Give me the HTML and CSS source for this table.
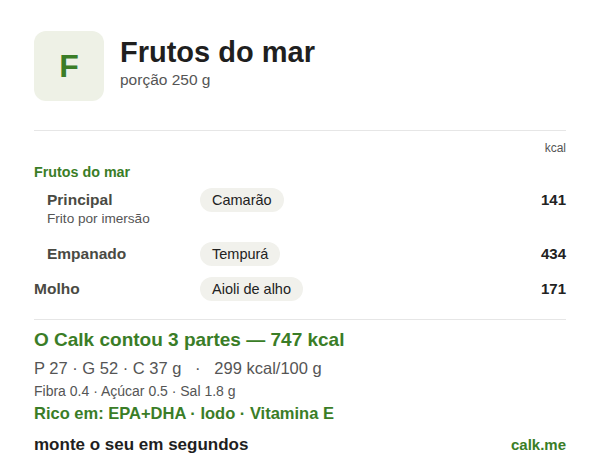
FILE: index.html
```html
<!DOCTYPE html>
<html>
<head>
    <title>Frutos do mar</title>
    <link rel="stylesheet" href="styles.css">
</head>
<body>
    <div class="card">
        <div class="header">
            <div class="badge">F</div>
            <div class="heading">
                <h1>Frutos do mar</h1>
                <div class="portion">porção 250 g</div>
            </div>
        </div>

        <div class="parts">
            <div class="unit">kcal</div>
            <div class="group">Frutos do mar</div>

            <div class="row sub">
                <div class="name">
                    <div class="label">Principal</div>
                    <div class="note">Frito por imersão</div>
                </div>
                <div class="choice"><span class="pill">Camarão</span></div>
                <div class="kcal">141</div>
            </div>

            <div class="row sub">
                <div class="name">
                    <div class="label">Empanado</div>
                </div>
                <div class="choice"><span class="pill">Tempurá</span></div>
                <div class="kcal">434</div>
            </div>

            <div class="row">
                <div class="name">
                    <div class="label">Molho</div>
                </div>
                <div class="choice"><span class="pill">Aioli de alho</span></div>
                <div class="kcal">171</div>
            </div>
        </div>

        <div class="summary">
            <div class="total">O Calk contou 3 partes — 747 kcal</div>
            <div class="macros">P 27 · G 52 · C 37 g &nbsp; · &nbsp; 299 kcal/100 g</div>
            <div class="micros">Fibra 0.4 · Açúcar 0.5 · Sal 1.8 g</div>
            <div class="rich">Rico em: EPA+DHA · Iodo · Vitamina E</div>
        </div>

        <div class="footer">
            <span class="cta">monte o seu em segundos</span>
            <span class="site">calk.me</span>
        </div>
    </div>
</body>
</html>
```

FILE: styles.css
```css
body {
    margin: 0;
    background-color: #fff;
    color: #222;
    font-family: "Liberation Sans", Arial, sans-serif;
}

.card {
    padding: 31px 34px 0;
}

.header {
    display: flex;
    align-items: flex-start;
    gap: 16px;
    padding-bottom: 29px;
    border-bottom: 1px solid #e6e6e6;
}

.badge {
    width: 70px;
    height: 70px;
    border-radius: 12px;
    background-color: #eef1e6;
    color: #3a7d27;
    font-size: 32px;
    font-weight: bold;
    display: flex;
    align-items: center;
    justify-content: center;
}

.heading {
    padding-top: 4px;
}

h1 {
    margin: 0 0 2px;
    font-size: 29px;
    line-height: 34px;
    color: #1f1f1f;
}

.portion {
    font-size: 15.5px;
    line-height: 18px;
    color: #555;
}

.parts {
    padding: 10px 0 18px;
    border-bottom: 1px solid #e6e6e6;
}

.unit {
    text-align: right;
    font-size: 12px;
    line-height: 14px;
    color: #555;
}

.group {
    margin-top: 9px;
    font-size: 14.3px;
    line-height: 16px;
    font-weight: bold;
    color: #3a7d27;
}

.row {
    display: grid;
    grid-template-columns: 166px 1fr 60px;
    align-items: start;
    margin-top: 11px;
}

.group + .row {
    margin-top: 8px;
}

.row.sub {
    padding-left: 13px;
    grid-template-columns: 153px 1fr 60px;
}

.label {
    font-size: 15.5px;
    font-weight: bold;
    color: #4a4a43;
    line-height: 24px;
}

.note {
    font-size: 13.6px;
    line-height: 13px;
    margin-bottom: 6px;
    color: #555;
}

.pill {
    display: inline-block;
    padding: 0 12px;
    border-radius: 12px;
    background-color: #f1f1ec;
    font-size: 14.5px;
    line-height: 24px;
    color: #222;
}

.kcal {
    text-align: right;
    font-size: 15px;
    font-weight: bold;
    line-height: 24px;
}

.summary {
    padding-top: 9px;
}

.total {
    font-size: 19px;
    line-height: 22px;
    font-weight: bold;
    color: #3a7d27;
}

.macros {
    margin-top: 8px;
    font-size: 16.5px;
    line-height: 19px;
    color: #555;
}

.micros {
    margin-top: 5px;
    font-size: 14px;
    line-height: 16px;
    color: #555;
}

.rich {
    margin-top: 5px;
    font-size: 16.5px;
    line-height: 19px;
    font-weight: bold;
    color: #3a7d27;
}

.footer {
    display: flex;
    justify-content: space-between;
    align-items: baseline;
    margin-top: 12px;
    line-height: 20px;
}

.cta {
    font-size: 17px;
    font-weight: bold;
    color: #1f1f1f;
}

.site {
    font-size: 15px;
    font-weight: bold;
    color: #3a7d27;
}
```
